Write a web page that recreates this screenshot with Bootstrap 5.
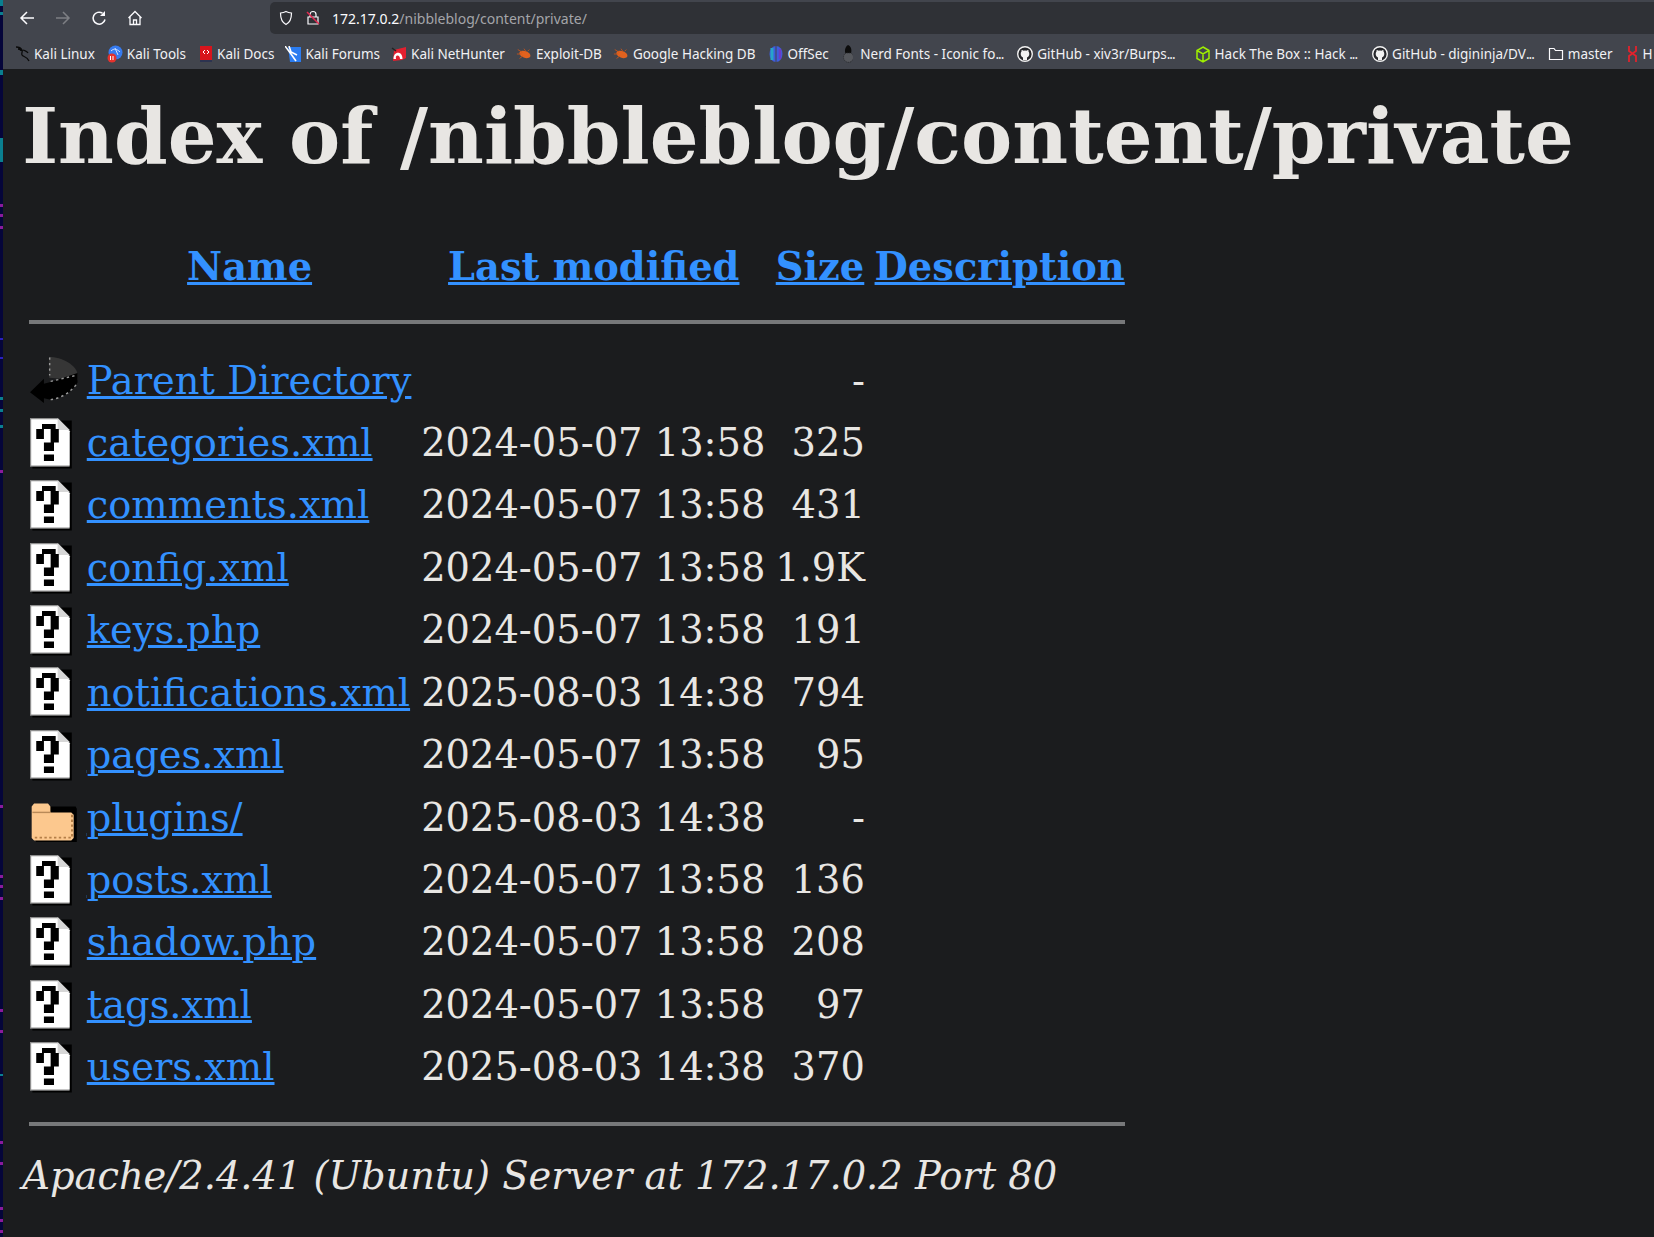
<!DOCTYPE html>
<html lang="en">
<head>
  <meta charset="UTF-8" />
  <title>Index of /nibbleblog/content/private</title>
  <link href="https://cdn.jsdelivr.net/npm/bootstrap@5.3.2/dist/css/bootstrap.min.css" rel="stylesheet">
  <style>
    html, body { height: 100%; }
    body { background: #1b1c1e; color: #e8e6e3; overflow: hidden; font-family: "DejaVu Serif", serif; font-size: 38.4px; line-height: normal; }
    .desk-strip { width: 3px; flex: none; background: #05053a; }
    .desk-strip svg { display: block; }
    .browser { min-width: 0; }
    .chrome { font-family: "Noto Sans", sans-serif; background: #42454d; color: #f1f1f4; }
    .tool-row { height: 35px; padding-left: 5.500px; }
    .tool-btn { width: 36px; height: 36px; }
    .url-bar { background: #2f3136; height: 32px; margin-left: 117.500px; margin-top: 2px; border-radius: 5px 0 0 5px; padding-left: 8px; font-size: 14px; }
    .url-lock { margin-left: 3px; }
    .url-host { color: #fbfbfe; }
    .url-path { color: #a4a5a9; }
    .mark-row { height: 34px; padding: 4px 0 0 13px; font-size: 13.500px; white-space: nowrap; overflow: hidden; }
    .mark-item { flex: none; gap: 4px; margin-right: 12px; }
    .mark-item svg { flex: none; }
    .mark-dots { letter-spacing: -1px; }
    .mark-item:nth-child(2) { margin-right: 13px; }
    .mark-item:nth-child(3) { margin-right: 11px; }
    .mark-item:nth-child(4), .mark-item:nth-child(5), .mark-item:nth-child(6) { margin-right: 11px; }
    .mark-item:nth-child(7) { margin-right: 14px; }
    .mark-item:nth-child(8) { margin-right: 10px; }
    .mark-item:nth-child(9) { margin-right: 14px; }
    .mark-item:nth-child(10) { margin-right: 20px; }
    .mark-item:nth-child(11) { margin-right: 15px; }
    .mark-item:nth-child(12) { margin-right: 14px; }
    .mark-item:nth-child(13) { margin-right: 14px; }
    .mark-item:last-child { margin-right: 0; }
    .index-page { padding: 0 19.200px; }
    .index-page h1 { font-size: 76.800px; font-weight: 700; margin: 21.500px 0 56px; line-height: normal; }
    .index-page a { color: #3391ff; }
    .index-page table { border-collapse: separate; border-spacing: 4.800px 5px; margin-left: 2.400px; }
    .index-page th { font-weight: 700; text-align: center; padding: 2.400px; }
    .index-page th.desc-head { padding: 2.400px 0 2.400px 3.300px; }
    .index-page td { padding: 2.400px 3.400px 2.400px 2.400px; vertical-align: middle; }
    .index-page td.ic-cell { padding: 4px 1.900px .65px; }
    .index-page td.num { padding-right: 2.400px; text-align: right; }
    .rule { height: 4px; background: #77787a; margin: 24px 0 22px; }
    .rule-end { margin: 21.500px 0 12.500px; }
    .file-icon { display: block; width: 48px; height: 52.800px; }
    .foot-addr { font-style: italic; margin-top: 9px; }
  </style>
</head>
<body class="d-flex">
  <svg width="0" height="0" class="position-absolute">
    <defs>
      <symbol id="unk" viewBox="0 0 20 22">
        <path d="M1 1h16.400v20H1z" fill="#000"/>
        <path d="M0 0h11.500l5 5v15.300H0z" fill="#8d8d8d"/>
        <path d="M.5.500h11l5 5v14.300H.5z" fill="#fff"/>
        <path d="M11.500 0l5 5h-5z" fill="#d6d6d6"/>
        <path d="M5 2.500h5.700v2.100H12v5.600H10v3.500H5.800v-3.500h2.800V4.600H5.800v4.200H2.600V4.600H5zM5.800 15.200H10v2.700H5.800z" fill="#000"/>
      </symbol>
      <symbol id="gh" viewBox="0 0 16 16">
        <circle cx="8" cy="8" r="7.300" fill="#26272b" stroke="#f2f2f2" stroke-width="1.400"/>
        <path d="M6 14v-2.500c-1.200-.5-2.300-1.600-2.300-3.600 0-.9.300-1.700.8-2.300-.1-.6 0-1.200.2-1.700.7 0 1.400.4 1.900.8a6 6 0 0 1 2.800 0c.5-.4 1.200-.8 1.900-.8.2.5.3 1.100.2 1.700.5.600.8 1.400.8 2.300 0 2-1.100 3.100-2.300 3.600V14z" fill="#f2f2f2"/>
      </symbol>
      <symbol id="bug" viewBox="0 0 18 14">
        <ellipse cx="10" cy="7.500" rx="6.500" ry="3.800" fill="#e2621e" transform="rotate(20 10 7.500)"/>
        <path d="M1 7h5M2 2l5 3M4 12l4-3M9 1l2 3M15 2l-2 2" stroke="#c4551c" fill="none"/>
      </symbol>
    </defs>
  </svg>

  <div class="desk-strip">
    <svg width="3" height="1237" viewBox="0 0 3 1237">
      <g fill="#0a7f90"><rect y="0" width="3" height="6"/><rect y="12" width="3" height="3"/><rect y="70" width="3" height="5"/><rect y="138" width="3" height="24"/><rect y="397" width="3" height="3"/><rect y="409" width="3" height="3"/><rect y="425" width="3" height="3"/><rect y="1074" width="3" height="2"/></g>
      <g fill="#8a1a9c"><rect y="204" width="3" height="3"/><rect y="214" width="3" height="3"/><rect y="226" width="3" height="3"/><rect y="470" width="3" height="3"/><rect y="805" width="3" height="3"/><rect y="875" width="3" height="3"/><rect y="885" width="3" height="3"/><rect y="897" width="3" height="3"/><rect y="1009" width="3" height="3"/><rect y="1030" width="3" height="3"/><rect y="1141" width="3" height="3"/><rect y="1162" width="3" height="3"/><rect y="1207" width="3" height="3"/><rect y="1219" width="3" height="3"/><rect y="1230" width="3" height="3"/></g>
      <g fill="#2a1fc0"><rect y="338" width="3" height="2"/><rect y="357" width="3" height="2"/></g>
    </svg>
  </div>
  <div class="browser flex-grow-1">
    <div class="chrome">
      <div class="tool-row d-flex align-items-start">
        <div class="tool-btn d-flex align-items-center justify-content-center">
          <svg width="16" height="16" viewBox="0 0 16 16" fill="none" stroke="#fbfbfe" stroke-width="1.500"><path d="M15 8H2M8 2 2 8l6 6"/></svg>
        </div>
        <div class="tool-btn d-flex align-items-center justify-content-center">
          <svg width="16" height="16" viewBox="0 0 16 16" fill="none" stroke="#7d7f84" stroke-width="1.500"><path d="M1 8h13M8 2l6 6-6 6"/></svg>
        </div>
        <div class="tool-btn d-flex align-items-center justify-content-center">
          <svg width="16" height="16" viewBox="0 0 16 16" fill="none" stroke="#fbfbfe" stroke-width="1.500"><path d="M14 9.500A6 6 0 1 1 11.500 3.200"/><path d="M14 1v5H9z" fill="#fbfbfe" stroke="none"/></svg>
        </div>
        <div class="tool-btn d-flex align-items-center justify-content-center">
          <svg width="16" height="16" viewBox="0 0 16 16" fill="none" stroke="#fbfbfe" stroke-width="1.300"><path d="M1.500 8 8 1.500 14.500 8M3 7v7.500h10V7M6.500 14.500V10h3v4.500"/></svg>
        </div>
        <div class="url-bar flex-grow-1 d-flex align-items-center gap-2">
          <svg width="16" height="16" viewBox="0 0 16 16" fill="none" stroke="#fbfbfe" stroke-width="1.200"><path d="M8 1.500c2 1 3.500 1.300 5.500 1.500 0 6-1.500 9.500-5.500 11.500C4 12.500 2.500 9 2.500 3 4.500 2.800 6 2.500 8 1.500z"/></svg>
          <svg class="url-lock" width="16" height="16" viewBox="0 0 16 16" fill="none"><path d="M5 7V4.500a3 3 0 0 1 6 0V7M3 7h10v7H3z" stroke="#fbfbfe" stroke-width="1.200"/><path d="M2 2l12 12" stroke="#e22850" stroke-width="1.500"/></svg>
          <span class="url-lock"><span class="url-host">172.17.0.2</span><span class="url-path">/nibbleblog/content/private/</span></span>
        </div>
      </div>
      <div class="mark-row d-flex align-items-center">
        <div class="mark-item d-flex align-items-center"><svg width="14" height="16" viewBox="0 0 14 16" fill="none" stroke="#0a0a0a" stroke-width="1.300"><path d="M0 1c3 0 5 1 6 3s-1 3 0 5 5 1 7 6M2 3c2 0 3 1 3 2M7 4c2 1 4 1 5 3"/></svg>Kali Linux</div>
        <div class="mark-item d-flex align-items-center"><svg width="16" height="18" viewBox="0 0 16 18"><circle cx="8.500" cy="7.500" r="7" fill="#367bf0"/><path d="M4 6c3-3 6-2 9 1M8 3l3 7" stroke="#cfe0ff" fill="none"/><circle cx="5" cy="13" r="4.500" fill="#e5322d"/><path d="M3.500 11v4M6 11v4" stroke="#fff"/></svg>Kali Tools</div>
        <div class="mark-item d-flex align-items-center"><svg width="14" height="18" viewBox="0 0 14 18"><rect x="1" y="1" width="12" height="15" fill="#d8141c"/><rect x="1" y="15" width="12" height="2" fill="#2d3350"/><path d="M6 5 4 7l2 2M8 5l2 2-2 2" stroke="#fff" fill="none"/></svg>Kali Docs</div>
        <div class="mark-item d-flex align-items-center"><svg width="16" height="16" viewBox="0 0 16 16"><path d="M3 1h13v15H5z" fill="#2b7cf0"/><path d="M0 0l6 8 5 7M4 0l2 6 6 3" stroke="#fff" stroke-width="1.600" fill="none"/></svg>Kali Forums</div>
        <div class="mark-item d-flex align-items-center"><svg width="16" height="16" viewBox="0 0 16 16"><path d="M3 4l12-3v11l-4 2-9 1z" fill="#e3202f"/><path d="M2.500 13c0-5 3-7 6-6 2 .7 3 3 3 6l-2.500 0c0-2-1-3.500-2.500-3.500S4.500 11 5 13z" fill="#fff"/><path d="M1 2l4 3" stroke="#222" stroke-width="1.500"/></svg>Kali NetHunter</div>
        <div class="mark-item d-flex align-items-center"><svg width="16" height="14"><use href="#bug"/></svg>Exploit-DB</div>
        <div class="mark-item d-flex align-items-center"><svg width="16" height="14"><use href="#bug"/></svg>Google Hacking DB</div>
        <div class="mark-item d-flex align-items-center"><svg width="14" height="16" viewBox="0 0 14 16"><ellipse cx="7" cy="8" rx="6.500" ry="8" fill="#3e5ddb"/><path d="M3 2v12" stroke="#27a5c9" stroke-width="3"/><path d="M7 0v16" stroke="#42454d" stroke-width="1"/><path d="M11 3v10" stroke="#6a3cc9" stroke-width="2.500"/></svg>OffSec</div>
        <div class="mark-item d-flex align-items-center"><svg width="14" height="18" viewBox="0 0 14 18"><path d="M9 0c3 1 4 5 3 8L7 10C5 6 6 2 9 0z" fill="#0c0c0c"/><path d="M7 8a5 5 0 1 0 5 0z" fill="#55575c" stroke="#2a2b2e" stroke-dasharray="1 1"/></svg><span>&nbsp;Nerd Fonts - Iconic fo<span class="mark-dots">...</span></span></div>
        <div class="mark-item d-flex align-items-center"><svg width="16" height="16"><use href="#gh"/></svg><span>GitHub - xiv3r/Burps<span class="mark-dots">...</span></span></div>
        <div class="mark-item d-flex align-items-center"><svg width="16" height="17" viewBox="0 0 16 17" fill="none" stroke="#9fef00" stroke-width="1.500"><path d="M8 1l6 3.500v8L8 16l-6-3.500v-8zM2 4.500 8 8l6-3.500M8 8v8"/></svg><span>Hack The Box :: Hack <span class="mark-dots">...</span></span></div>
        <div class="mark-item d-flex align-items-center"><svg width="16" height="16"><use href="#gh"/></svg><span>GitHub - digininja/DV<span class="mark-dots">...</span></span></div>
        <div class="mark-item d-flex align-items-center"><svg width="16" height="16" viewBox="0 0 16 16" fill="none" stroke="#fbfbfe" stroke-width="1.200"><path d="M1.500 13.500v-11h4.500l1.500 2h7v9z"/></svg>master</div>
        <div class="mark-item d-flex align-items-center"><svg width="12" height="16" viewBox="0 0 12 16" fill="none" stroke="#e0232d" stroke-width="1.800"><path d="M2 0v5l7 5v6M9 0v5L2 10v6"/></svg>H</div>
      </div>
    </div>

    <div class="index-page">
      <h1>Index of /nibbleblog/content/private</h1>
      <table>
        <tr><th><span class="d-none">icon</span></th><th><a href="#">Name</a></th><th><a href="#">Last modified</a></th><th><a href="#">Size</a></th><th class="desc-head"><a href="#">Description</a></th></tr>
        <tr><th colspan="5" class="p-0"><div class="rule"></div></th></tr>
        <tr>
          <td class="ic-cell"><svg class="file-icon" viewBox="0 0 20 22"><path d="M8 .8C13 .8 19.800 4 19.800 8.500v2L8 9.500z" fill="#363636"/><path d="M0 15.500 5.800 9.900V12l2.800-.8L19.800 7.500v4C18 15 14 18 8.600 18.600L5.800 18v2z" fill="#000"/><path d="M8.200 1v7.500M8.600 11l10.600-2.500M8.600 18.600C13 18 17 15.500 19.500 12" stroke="#999" stroke-width=".6" stroke-dasharray="1 1.300" fill="none"/></svg></td>
          <td><a href="#">Parent Directory</a></td><td></td><td class="num">-</td><td></td>
        </tr>
        <tr><td class="ic-cell"><svg class="file-icon"><use href="#unk"/></svg></td><td><a href="#">categories.xml</a></td><td>2024-05-07 13:58</td><td class="num">325</td><td></td></tr>
        <tr><td class="ic-cell"><svg class="file-icon"><use href="#unk"/></svg></td><td><a href="#">comments.xml</a></td><td>2024-05-07 13:58</td><td class="num">431</td><td></td></tr>
        <tr><td class="ic-cell"><svg class="file-icon"><use href="#unk"/></svg></td><td><a href="#">config.xml</a></td><td>2024-05-07 13:58</td><td class="num">1.9K</td><td></td></tr>
        <tr><td class="ic-cell"><svg class="file-icon"><use href="#unk"/></svg></td><td><a href="#">keys.php</a></td><td>2024-05-07 13:58</td><td class="num">191</td><td></td></tr>
        <tr><td class="ic-cell"><svg class="file-icon"><use href="#unk"/></svg></td><td><a href="#">notifications.xml</a></td><td>2025-08-03 14:38</td><td class="num">794</td><td></td></tr>
        <tr><td class="ic-cell"><svg class="file-icon"><use href="#unk"/></svg></td><td><a href="#">pages.xml</a></td><td>2024-05-07 13:58</td><td class="num">95</td><td></td></tr>
        <tr>
          <td class="ic-cell"><svg class="file-icon" viewBox="0 0 20 22"><path d="M1.500 6h17.500l.5 1v13.800H2.500z" fill="#000"/><path d="M.7 6l1-1.200h5.800L8.500 6v2.500h8.700l1 1v9.700l-1 1H1.700l-1-1z" fill="#fcc88e"/><path d="M1 8.500h7.500" stroke="#b98a58" stroke-width=".6" fill="none"/><path d="M2 19h15.500V9.500" stroke="#b57f48" stroke-width=".8" stroke-dasharray="1 1" fill="none"/></svg></td>
          <td><a href="#">plugins/</a></td><td>2025-08-03 14:38</td><td class="num">-</td><td></td>
        </tr>
        <tr><td class="ic-cell"><svg class="file-icon"><use href="#unk"/></svg></td><td><a href="#">posts.xml</a></td><td>2024-05-07 13:58</td><td class="num">136</td><td></td></tr>
        <tr><td class="ic-cell"><svg class="file-icon"><use href="#unk"/></svg></td><td><a href="#">shadow.php</a></td><td>2024-05-07 13:58</td><td class="num">208</td><td></td></tr>
        <tr><td class="ic-cell"><svg class="file-icon"><use href="#unk"/></svg></td><td><a href="#">tags.xml</a></td><td>2024-05-07 13:58</td><td class="num">97</td><td></td></tr>
        <tr><td class="ic-cell"><svg class="file-icon"><use href="#unk"/></svg></td><td><a href="#">users.xml</a></td><td>2025-08-03 14:38</td><td class="num">370</td><td></td></tr>
        <tr><th colspan="5" class="p-0"><div class="rule rule-end"></div></th></tr>
      </table>
      <div class="foot-addr">Apache/2.4.41 (Ubuntu) Server at 172.17.0.2 Port 80</div>
    </div>
  </div>
</body>
</html>
